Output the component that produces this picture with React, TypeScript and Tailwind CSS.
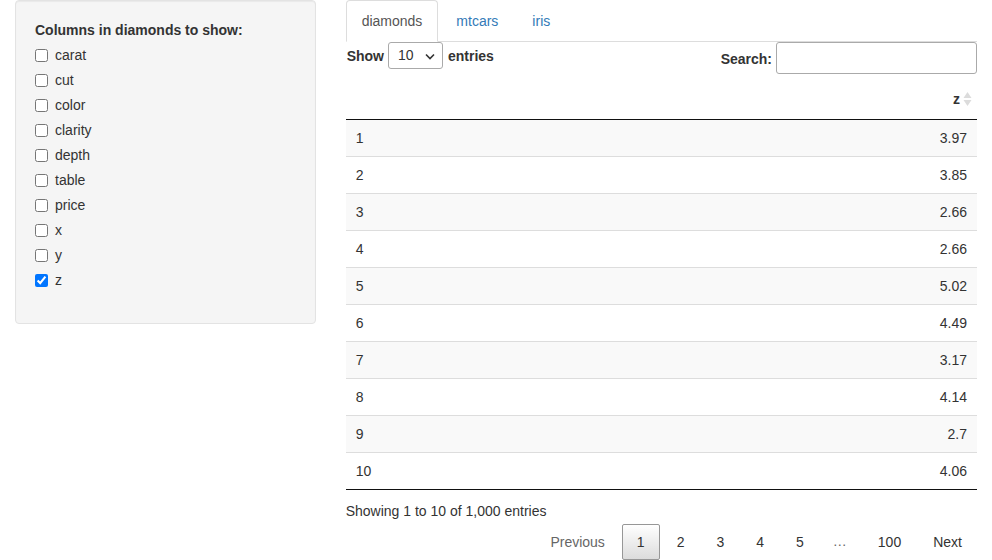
import { useState } from "react";

const columns = ["carat", "cut", "color", "clarity", "depth", "table", "price", "x", "y", "z"];
const rows = ["3.97", "3.85", "2.66", "2.66", "5.02", "4.49", "3.17", "4.14", "2.7", "4.06"];
const tabs = ["diamonds", "mtcars", "iris"];

function SortIcon() {
  return (
    <svg width="9" height="16" viewBox="0 0 9 16" className="ml-[3px]">
      <path d="M4.5 1 L8.5 7 L0.5 7 Z" fill="#dcdcdc" />
      <path d="M4.5 15 L8.5 9 L0.5 9 Z" fill="#dcdcdc" />
    </svg>
  );
}

function App() {
  const [checked, setChecked] = useState<string[]>(["z"]);
  const [tab, setTab] = useState("diamonds");

  const toggle = (name: string) =>
    setChecked((prev) => (prev.includes(name) ? prev.filter((c) => c !== name) : [...prev, name]));

  return (
    <div className="flex min-h-[560px] bg-white font-['Liberation_Sans',Arial,sans-serif] text-[14px] leading-5 text-[#333]">
      <div className="w-[330.67px] shrink-0 pl-[15px] pr-[15px]">
        <div className="rounded-[4px] border border-[#e3e3e3] bg-[#f5f5f5] px-[19px] pt-[19px] pb-[33px] shadow-[inset_0_1px_1px_rgba(0,0,0,0.05)]">
          <div className="mb-[5px] font-bold">Columns in diamonds to show:</div>
          <div className="flex flex-col gap-[5px]">
            {columns.map((c) => (
              <label key={c} className="flex h-5 items-center">
                <input
                  type="checkbox"
                  checked={checked.includes(c)}
                  onChange={() => toggle(c)}
                  className="m-0 h-[13px] w-[13px] accent-[#0075ff]"
                />
                <span className="ml-[7px]">{c}</span>
              </label>
            ))}
          </div>
        </div>
      </div>

      <div className="flex w-[661.33px] flex-col pl-[15px] pr-[15px]">
        <div className="flex h-[42px] border-b border-[#ddd]">
          {tabs.map((t) => (
            <button
              key={t}
              onClick={() => setTab(t)}
              className={
                t === tab
                  ? "mr-[2px] -mb-px h-[42px] rounded-t-[4px] border border-[#ddd] border-b-white bg-white px-[15px] text-[#555]"
                  : "mr-[2px] h-[41px] rounded-t-[4px] border border-transparent px-[15px] text-[#337ab7]"
              }
            >
              {t}
            </button>
          ))}
        </div>

        <div className="flex h-[36px] items-start justify-between">
          <div className="flex items-center">
            <span className="ml-px font-bold">Show</span>
            <div className="relative ml-[4px] h-[27px] w-[55px] rounded-[3px] border border-[#aaa] bg-white">
              <span className="absolute left-[9px] top-[2px]">10</span>
              <svg width="10" height="7" viewBox="0 0 10 7" className="absolute right-[7px] top-[10px]">
                <path d="M1 1.5 L5 5.5 L9 1.5" fill="none" stroke="#333" strokeWidth="1.6" />
              </svg>
            </div>
            <span className="ml-[5px] font-bold">entries</span>
          </div>
          <div className="flex items-center">
            <span className="mt-px font-bold">Search:</span>
            <input className="ml-[4px] h-[32px] w-[201px] rounded-[3px] border border-[#aaa] bg-white px-[3px] outline-none" />
          </div>
        </div>

        <table className="w-full border-collapse">
          <thead>
            <tr className="border-b border-[#111]">
              <th className="h-[40px] p-0"></th>
              <th className="h-[40px] py-[10px] pr-[5px] text-right font-bold">
                <span className="inline-flex items-center align-middle">
                  z
                  <SortIcon />
                </span>
              </th>
            </tr>
          </thead>
          <tbody>
            {rows.map((v, i) => (
              <tr
                key={i}
                className={`${i % 2 === 0 ? "bg-[#f9f9f9]" : "bg-white"} ${i === rows.length - 1 ? "border-b border-[#111]" : "border-b border-[#ddd]"}`}
              >
                <td className="h-[37px] px-[10px] py-0">{i + 1}</td>
                <td className="h-[37px] px-[10px] py-0 text-right">{v}</td>
              </tr>
            ))}
          </tbody>
        </table>

        <div className="pt-[11px]">Showing 1 to 10 of 1,000 entries</div>

        <div className="flex justify-end pt-[3px]">
          <span className="ml-[2px] border border-transparent px-[14px] py-[7px] text-[#666]">Previous</span>
          <span className="ml-[2px] min-w-[37px] rounded-[2px] border border-[#979797] bg-gradient-to-b from-white to-[#dcdcdc] px-[14px] py-[7px] text-center">
            1
          </span>
          {["2", "3", "4", "5"].map((n) => (
            <span key={n} className="ml-[2px] min-w-[37px] border border-transparent px-[14px] py-[7px] text-center">
              {n}
            </span>
          ))}
          <span className="px-[14px] py-[7px] text-[#666]">…</span>
          <span className="ml-[2px] border border-transparent px-[14px] py-[7px]">100</span>
          <span className="ml-[2px] border border-transparent px-[14px] py-[7px]">Next</span>
        </div>
      </div>
    </div>
  );
}

export default App;
